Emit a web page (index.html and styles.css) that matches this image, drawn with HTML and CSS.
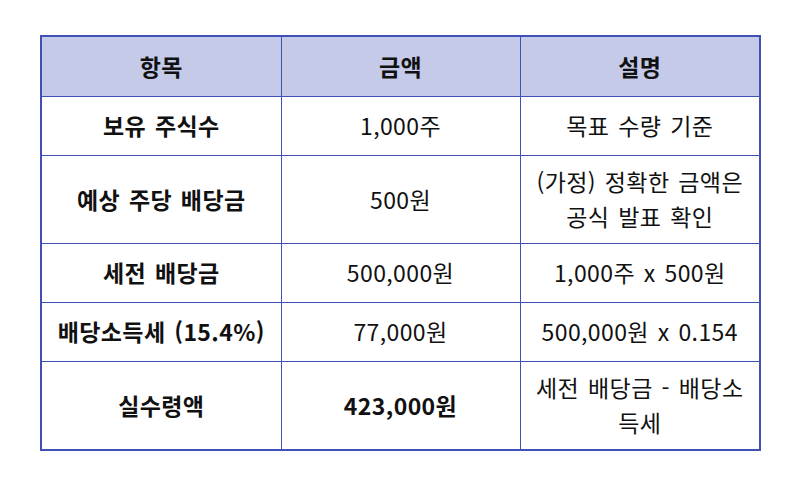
FILE: index.html
```html
<!DOCTYPE html>
<html lang="ko">
<head>
<meta charset="utf-8">
<link rel="stylesheet" href="styles.css">
</head>
<body>
<div class="wrap">
<table class="tbl">
  <colgroup><col class="c1"><col class="c2"><col class="c3"></colgroup>
  <thead>
    <tr class="r-head"><th>항목</th><th>금액</th><th>설명</th></tr>
  </thead>
  <tbody>
    <tr class="r1"><td class="lbl">보유 주식수</td><td>1,000주</td><td>목표 수량 기준</td></tr>
    <tr class="r2"><td class="lbl">예상 주당 배당금</td><td>500원</td><td>(가정) 정확한 금액은<br>공식 발표 확인</td></tr>
    <tr class="r1"><td class="lbl">세전 배당금</td><td>500,000원</td><td>1,000주 x 500원</td></tr>
    <tr class="r1"><td class="lbl">배당소득세 (15.4%)</td><td>77,000원</td><td>500,000원 x 0.154</td></tr>
    <tr class="r5"><td class="lbl">실수령액</td><td class="lbl">423,000원</td><td>세전 배당금 - 배당소<br>득세</td></tr>
  </tbody>
</table>
</div>
</body>
</html>
```
FILE: styles.css
```css
html, body { margin: 0; padding: 0; background: #fff; }
body { font-family: "Noto Sans CJK KR", "Noto Sans", sans-serif; color: #111; }
.wrap { padding: 35px 0 0 40px; }
.tbl {
  border-collapse: collapse;
  width: 719px;
  table-layout: fixed;
  border: 2px solid #3f51b5;
}
.c1 { width: 240px; }
.c2 { width: 239px; }
.c3 { width: 240px; }
.tbl th, .tbl td {
  border: 1px solid #3f51b5;
  text-align: center;
  vertical-align: middle;
  font-size: 23px;
  line-height: 35px;
  letter-spacing: 0.4px;
  word-spacing: 2px;
  padding: 0 4px;
  font-weight: 400;
}
.tbl th { background: #c5cae9; font-weight: 700; }
.tbl .lbl { font-weight: 700; }
.r-head { height: 60px; }
.r1 { height: 59px; }
.r2 { height: 88px; }
.r5 { height: 89px; }
```
